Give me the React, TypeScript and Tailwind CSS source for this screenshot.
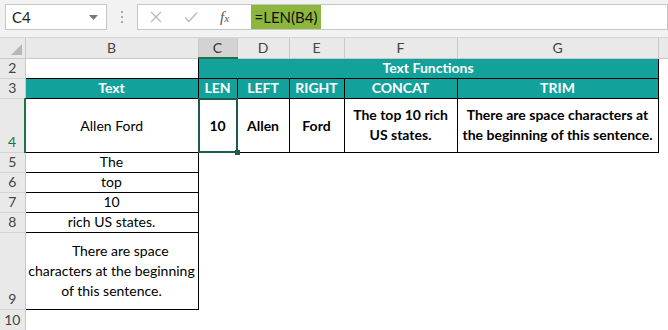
import React from 'react';

const FONT = "font-['Lato','Liberation_Sans',sans-serif]";

const cols = [
  { key: 'B', w: 173 },
  { key: 'C', w: 39 },
  { key: 'D', w: 52 },
  { key: 'E', w: 55 },
  { key: 'F', w: 113 },
  { key: 'G', w: 201 },
];

// row heights (2..10)
const ROWS: Record<number, number> = { 2: 20, 3: 20, 4: 54, 5: 20, 6: 20, 7: 20, 8: 20, 9: 77, 10: 21 };

const RowHead: React.FC<{ n: number; active?: boolean }> = ({ n, active }) => (
  <td
    className={`bg-[#e9e9e9] border-b border-[#d4d4d4] align-bottom text-center text-[14px] leading-[18px] pb-px ${
      active ? 'text-[#217346] border-r-2 border-r-[#217346]' : 'text-[#444] border-r border-r-[#c8c8c8]'
    }`}
  >
    {n}
  </td>
);

const Toolbar: React.FC = () => (
  <div className="h-[38px] bg-[#f2f2f2] flex items-start pt-[4px] border-b border-[#d6d6d6]">
    <div className="ml-[5px] w-[102px] h-[26px] bg-white border border-[#c6c6c6] flex items-center justify-between pl-[6px] pr-[8px]">
      <span className="text-[15px] text-[#222]">C4</span>
      <svg width="9" height="5" viewBox="0 0 9 5">
        <path d="M0 0h9L4.5 5z" fill="#777" />
      </svg>
    </div>
    <div className="w-[30px] h-[26px] flex flex-col items-center justify-center gap-[3px]">
      <span className="w-[2px] h-[2px] bg-[#a8a8a8]" />
      <span className="w-[2px] h-[2px] bg-[#a8a8a8]" />
      <span className="w-[2px] h-[2px] bg-[#a8a8a8]" />
    </div>
    <div className="flex-1 h-[26px] bg-white border border-[#c6c6c6] flex items-center">
      <div className="w-[113px] flex items-center">
        <svg className="ml-[12px]" width="12" height="12" viewBox="0 0 12 12">
          <path d="M1 1l10 10M11 1L1 11" stroke="#b9b9b9" strokeWidth="1.3" />
        </svg>
        <svg className="ml-[22px]" width="14" height="12" viewBox="0 0 14 12">
          <path d="M1 6.5l4 4L13 1.5" stroke="#b9b9b9" strokeWidth="1.3" fill="none" />
        </svg>
        <span className="ml-[22px] font-['Liberation_Serif',serif] italic text-[15px] text-[#555]">
          f<span className="text-[11px]">x</span>
        </span>
      </div>
      <div className="w-[70px] h-full bg-[#8cb63c] flex items-center justify-center text-[15px] text-[#111]">
        =LEN(B4)
      </div>
    </div>
  </div>
);

const App: React.FC = () => {
  const teal = 'bg-[#13a19c] text-white font-bold';
  const cell = 'border border-black text-center align-middle';
  return (
    <div className={`w-[668px] h-[330px] overflow-hidden bg-white ${FONT}`}>
      <Toolbar />
      <table className="table-fixed border-collapse text-[14px] text-black">
        <colgroup>
          <col style={{ width: 25 }} />
          {cols.map((c) => (
            <col key={c.key} style={{ width: c.w }} />
          ))}
          <col style={{ width: 10 }} />
        </colgroup>
        <tbody>
          <tr className="h-[20px]">
            <td className="bg-[#e9e9e9] border-r border-[#c8c8c8] border-b border-b-[#c8c8c8] relative p-0">
              <svg className="absolute right-[3px] bottom-[3px]" width="11" height="11" viewBox="0 0 11 11">
                <path d="M11 0v11H0z" fill="#b8b8b8" />
              </svg>
            </td>
            {cols.map((c) => (
              <td
                key={c.key}
                className={`text-center text-[14px] leading-[18px] border-r border-[#c8c8c8] ${
                  c.key === 'C'
                    ? 'bg-[#d3d3d3] text-[#333] border-b-2 border-b-[#217346]'
                    : 'bg-[#e9e9e9] text-[#444] border-b border-b-[#c8c8c8]'
                }`}
              >
                {c.key}
              </td>
            ))}
            <td className="bg-[#e9e9e9] border-b border-b-[#c8c8c8]" />
          </tr>

          <tr style={{ height: ROWS[2] }}>
            <RowHead n={2} />
            <td className="border-b border-black" />
            <td colSpan={5} className={`${cell} ${teal} leading-[18px]`}>
              Text Functions
            </td>
            <td />
          </tr>

          <tr style={{ height: ROWS[3] }}>
            <RowHead n={3} />
            {['Text', 'LEN', 'LEFT', 'RIGHT', 'CONCAT', 'TRIM'].map((t) => (
              <td key={t} className={`${cell} ${teal} leading-[18px]`}>
                {t}
              </td>
            ))}
            <td />
          </tr>

          <tr style={{ height: ROWS[4] }}>
            <RowHead n={4} active />
            <td className={cell}>Allen Ford</td>
            <td className={`${cell} font-bold relative`}>
              <div className="absolute inset-[-1px] border-2 border-[#1e5c4f]" />
              <div className="absolute right-[-3px] bottom-[-3px] w-[5px] h-[5px] bg-[#1e5c4f]" />
              10
            </td>
            <td className={`${cell} font-bold`}>Allen</td>
            <td className={`${cell} font-bold`}>Ford</td>
            <td className={`${cell} font-bold leading-[20px]`}>
              The top 10 rich
              <br />
              US states.
            </td>
            <td className={`${cell} font-bold leading-[20px]`}>
              There are space characters at
              <br />
              the beginning of this sentence.
            </td>
            <td />
          </tr>

          {[
            [5, 'The'],
            [6, 'top'],
            [7, '10'],
            [8, 'rich US states.'],
          ].map(([n, t]) => (
            <tr key={n} style={{ height: ROWS[n as number] }}>
              <RowHead n={n as number} />
              <td className={`${cell} leading-[18px]`}>{t}</td>
              <td colSpan={6} />
            </tr>
          ))}

          <tr style={{ height: ROWS[9] }}>
            <RowHead n={9} />
            <td className={`${cell} leading-[20px] whitespace-pre`}>
              {'     There are space'}
              <br />
              characters at the beginning
              <br />
              of this sentence.
            </td>
            <td colSpan={6} />
          </tr>

          <tr style={{ height: ROWS[10] }}>
            <RowHead n={10} />
            <td colSpan={7} />
          </tr>
        </tbody>
      </table>
    </div>
  );
};

export default App;
